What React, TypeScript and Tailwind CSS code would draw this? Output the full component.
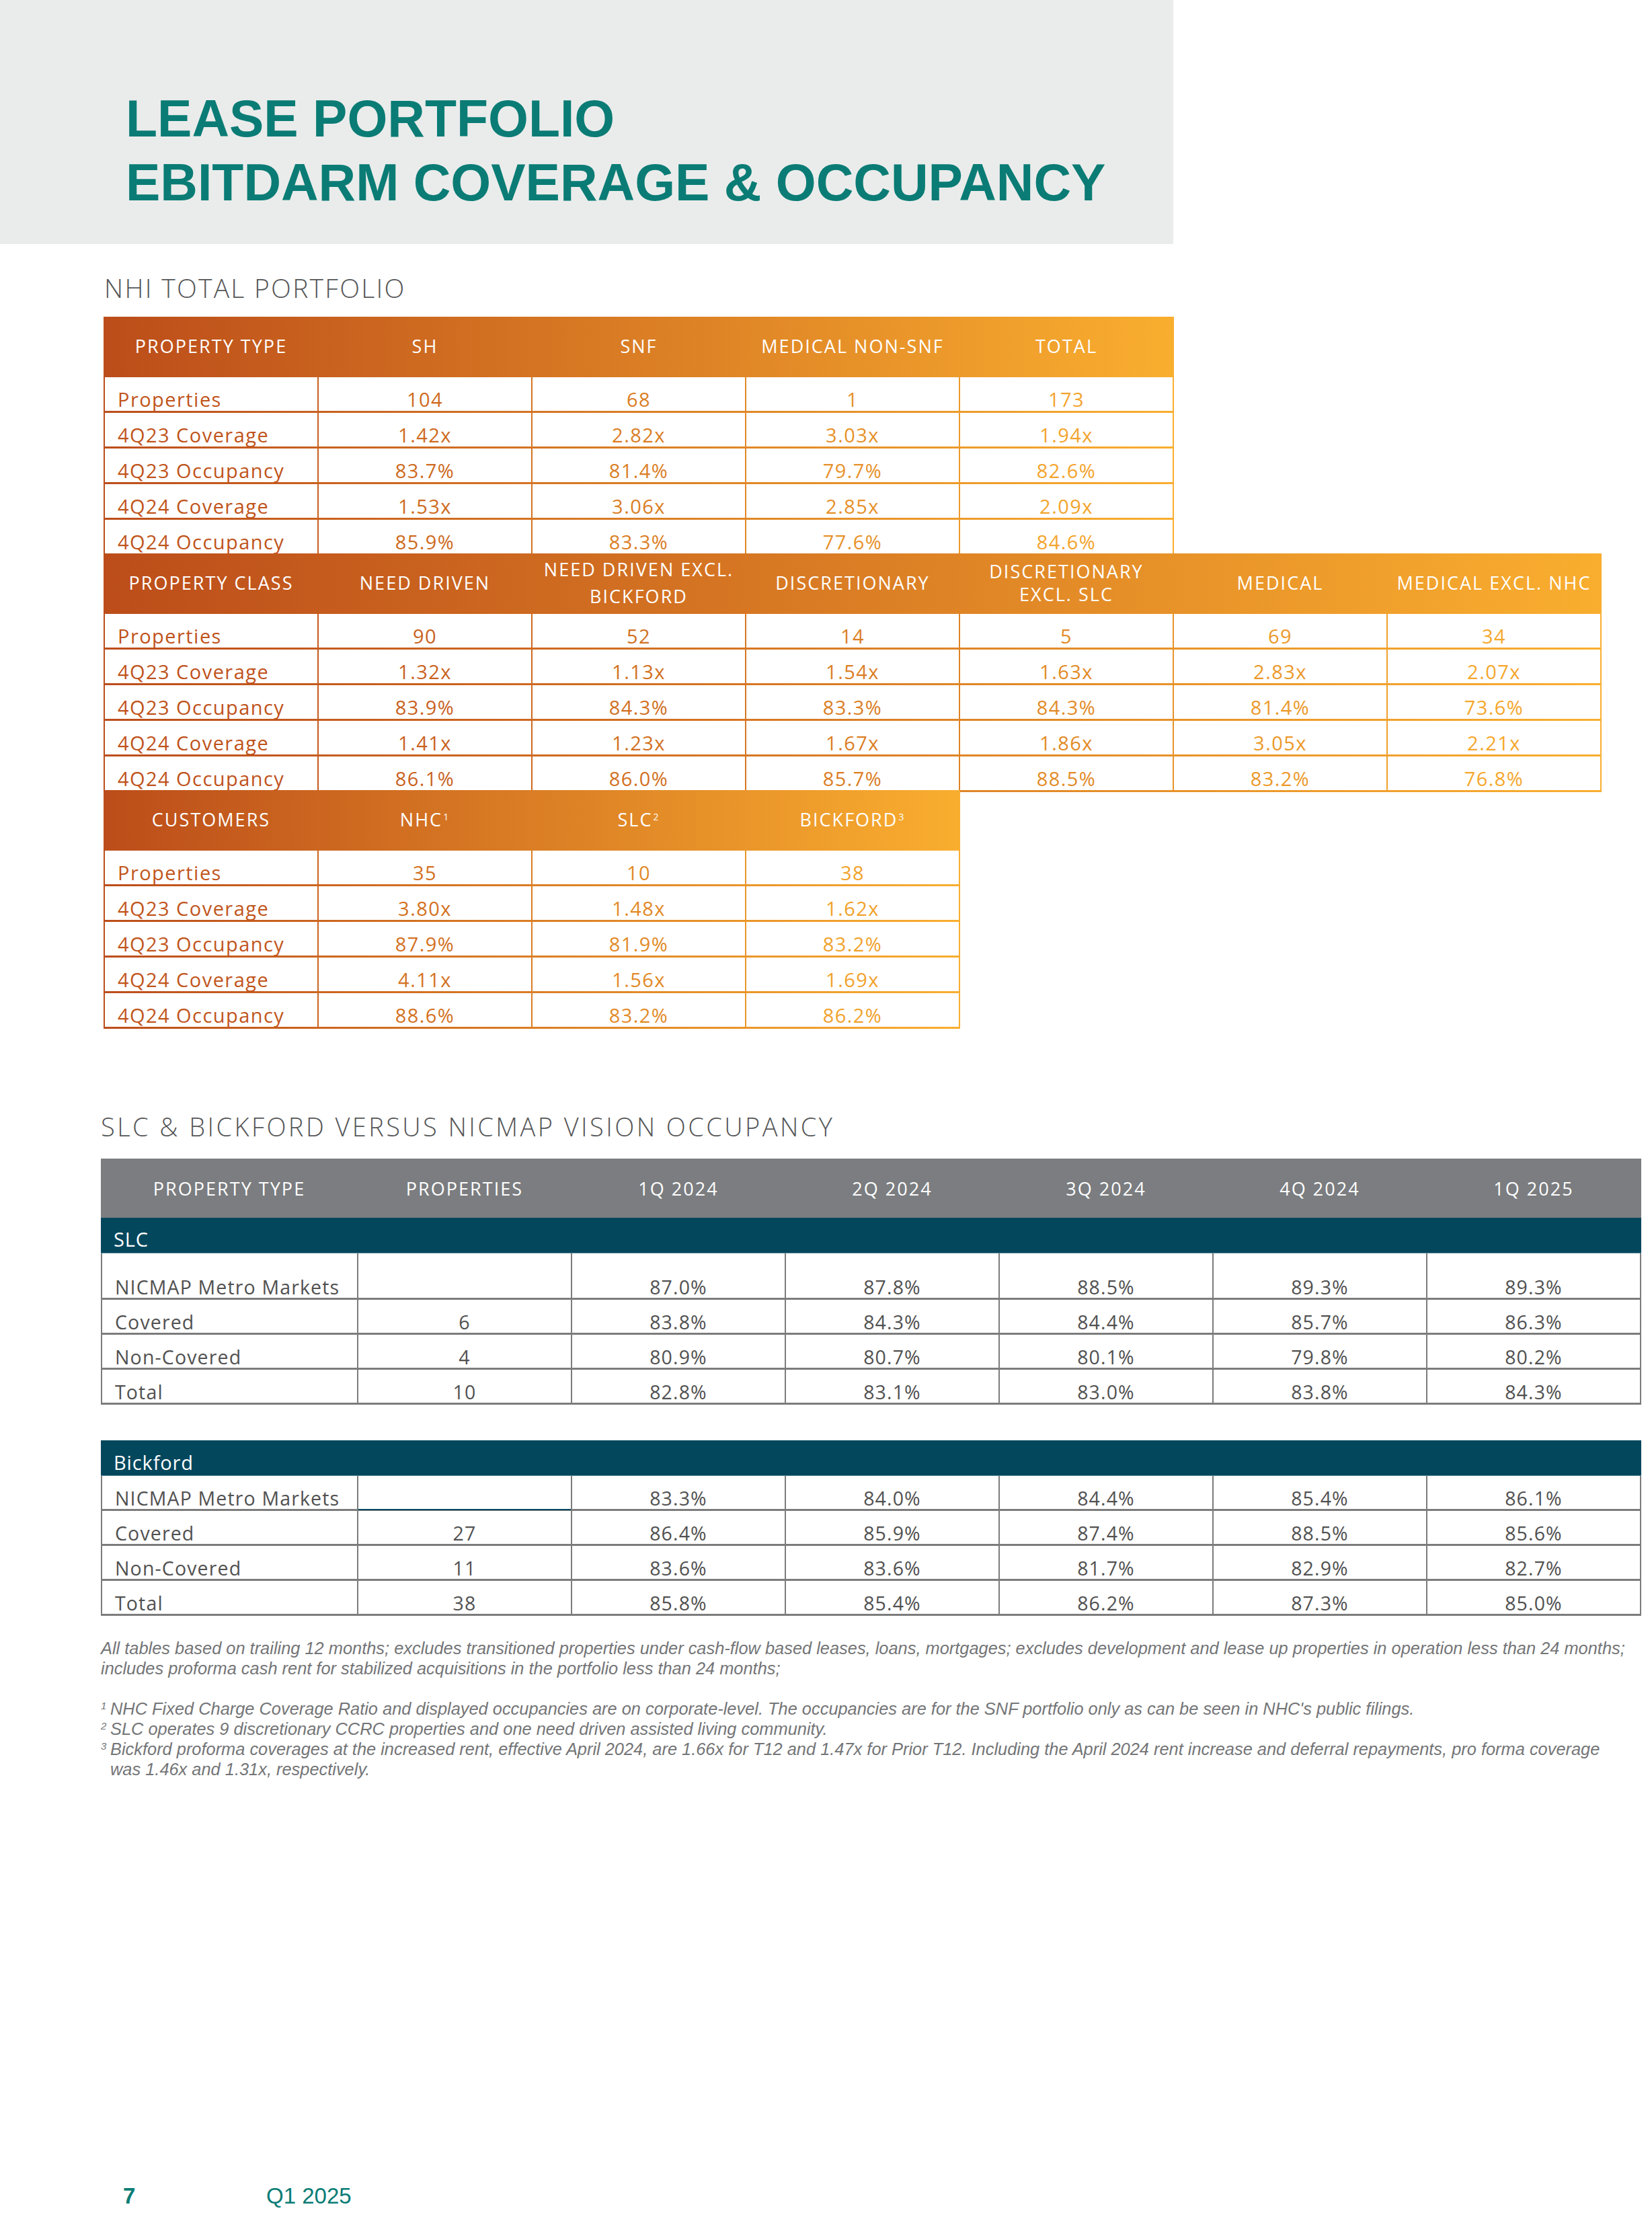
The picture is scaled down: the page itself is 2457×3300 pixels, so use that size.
import React from "react";

const C0 = [0xbc, 0x4d, 0x1a];
const C1 = [0xf9, 0xae, 0x2f];
function grad(t: number) {
  const c = C0.map((a, i) => Math.round(a + (C1[i] - a) * t));
  return `rgb(${c[0]},${c[1]},${c[2]})`;
}

const sans = "font-['Open_Sans','Noto_Sans',sans-serif]";

type OT = {
  heads: React.ReactNode[];
  rows: string[][];
  cols: string;
  width: number;
  wClass: string;
  first?: boolean;
};

function OrangeTable({ heads, rows, cols, width, wClass, first }: OT) {
  const t = (i: number) => (i === 0 ? 110 / width : (2 + i * 318 + 158) / width);
  return (
    <div
      className={`grid ${cols} ${wClass} gap-x-[2px] gap-y-[3px] px-[2px] pb-[3px] bg-[linear-gradient(to_right,#bc4d1a,#f9ae2f)] ${
        first ? "" : "-mt-[3px]"
      }`}
    >
      {heads.map((h, i) => (
        <div
          key={i}
          className="h-[87px] flex items-center justify-center text-center text-white uppercase text-[27px] tracking-[0.075em] leading-[36px]"
        >
          {h}
        </div>
      ))}
      {rows.map((r, ri) =>
        r.map((v, ci) => (
          <div
            key={ri + "-" + ci}
            className={`h-[50px] bg-white flex items-end pb-[3px] text-[29px] leading-none tracking-[0.05em] ${
              ci === 0 ? "pl-[19px]" : "justify-center"
            }`}
            style={{ color: grad(t(ci)) }}
          >
            {v}
          </div>
        ))
      )}
    </div>
  );
}

const Sup = ({ children }: { children: React.ReactNode }) => (
  <sup className="text-[14px] relative -top-[9px] ml-[1px] align-baseline">{children}</sup>
);

type LR = { label: string; props: string; vals: string[] };

function GrayGrid({ rows, tall, tealUnder }: { rows: LR[]; tall?: boolean; tealUnder?: boolean }) {
  return (
    <div className="grid grid-cols-[379px_repeat(6,316px)] gap-x-[2px] gap-y-[3px] px-[2px] pb-[3px] bg-[#7c7c7c] w-[2291px]">
      {rows.map((r, ri) => {
        const h = tall && ri === 0 ? "h-[66px]" : "h-[49px]";
        const cells = [r.label, r.props, ...r.vals];
        return cells.map((v, ci) => (
          <div
            key={ri + "-" + ci}
            className={`${h} bg-white flex items-end pb-[2px] text-[28.5px] leading-none tracking-[0.04em] text-[#515151] ${
              ci === 0 ? "pl-[19px]" : "justify-center"
            } ${tealUnder && ri === 0 && ci === 1 ? "shadow-[0_2px_0_#0b4a60]" : ""}`}
          >
            {v}
          </div>
        ));
      })}
    </div>
  );
}

export default function App() {
  const slc: LR[] = [
    { label: "NICMAP Metro Markets", props: "", vals: ["87.0%", "87.8%", "88.5%", "89.3%", "89.3%"] },
    { label: "Covered", props: "6", vals: ["83.8%", "84.3%", "84.4%", "85.7%", "86.3%"] },
    { label: "Non-Covered", props: "4", vals: ["80.9%", "80.7%", "80.1%", "79.8%", "80.2%"] },
    { label: "Total", props: "10", vals: ["82.8%", "83.1%", "83.0%", "83.8%", "84.3%"] },
  ];
  const bick: LR[] = [
    { label: "NICMAP Metro Markets", props: "", vals: ["83.3%", "84.0%", "84.4%", "85.4%", "86.1%"] },
    { label: "Covered", props: "27", vals: ["86.4%", "85.9%", "87.4%", "88.5%", "85.6%"] },
    { label: "Non-Covered", props: "11", vals: ["83.6%", "83.6%", "81.7%", "82.9%", "82.7%"] },
    { label: "Total", props: "38", vals: ["85.8%", "85.4%", "86.2%", "87.3%", "85.0%"] },
  ];

  return (
    <div className={`w-[2457px] h-[3300px] bg-white flex flex-col overflow-hidden ${sans}`}>
      {/* Title band */}
      <div className="w-[1745px] h-[363px] bg-[#eaeceb] pl-[187px] pt-[129px]">
        <h1 className="font-['Liberation_Sans',Arial,sans-serif] font-bold text-[77px] leading-[95px] text-[#0a7c75] whitespace-nowrap">
          LEASE PORTFOLIO
          <br />
          EBITDARM COVERAGE &amp; OCCUPANCY
        </h1>
      </div>

      {/* NHI total portfolio */}
      <div className="pl-[154px]">
        <div className="mt-[45px] text-[39px] leading-none font-light tracking-[0.058em] text-[#555657] pl-[1px]">
          NHI TOTAL PORTFOLIO
        </div>
        <div className="mt-[24px] flex flex-col">
          <OrangeTable
            first
            cols="grid-cols-[repeat(5,316px)]"
            width={1592}
            wClass="w-[1592px]"
            heads={["Property Type", "SH", "SNF", "Medical Non-SNF", "Total"]}
            rows={[
              ["Properties", "104", "68", "1", "173"],
              ["4Q23 Coverage", "1.42x", "2.82x", "3.03x", "1.94x"],
              ["4Q23 Occupancy", "83.7%", "81.4%", "79.7%", "82.6%"],
              ["4Q24 Coverage", "1.53x", "3.06x", "2.85x", "2.09x"],
              ["4Q24 Occupancy", "85.9%", "83.3%", "77.6%", "84.6%"],
            ]}
          />
          <OrangeTable
            cols="grid-cols-[repeat(7,316px)]"
            width={2228}
            wClass="w-[2228px]"
            heads={[
              "Property Class",
              "Need Driven",
              <span className="leading-[40px]">
                Need Driven Excl.
                <br />
                Bickford
              </span>,
              "Discretionary",
              <span className="leading-[34px]">
                Discretionary
                <br />
                Excl. SLC
              </span>,
              "Medical",
              "Medical Excl. NHC",
            ]}
            rows={[
              ["Properties", "90", "52", "14", "5", "69", "34"],
              ["4Q23 Coverage", "1.32x", "1.13x", "1.54x", "1.63x", "2.83x", "2.07x"],
              ["4Q23 Occupancy", "83.9%", "84.3%", "83.3%", "84.3%", "81.4%", "73.6%"],
              ["4Q24 Coverage", "1.41x", "1.23x", "1.67x", "1.86x", "3.05x", "2.21x"],
              ["4Q24 Occupancy", "86.1%", "86.0%", "85.7%", "88.5%", "83.2%", "76.8%"],
            ]}
          />
          <OrangeTable
            cols="grid-cols-[repeat(4,316px)]"
            width={1274}
            wClass="w-[1274px]"
            heads={[
              "Customers",
              <span>
                NHC<Sup>1</Sup>
              </span>,
              <span>
                SLC<Sup>2</Sup>
              </span>,
              <span>
                Bickford<Sup>3</Sup>
              </span>,
            ]}
            rows={[
              ["Properties", "35", "10", "38"],
              ["4Q23 Coverage", "3.80x", "1.48x", "1.62x"],
              ["4Q23 Occupancy", "87.9%", "81.9%", "83.2%"],
              ["4Q24 Coverage", "4.11x", "1.56x", "1.69x"],
              ["4Q24 Occupancy", "88.6%", "83.2%", "86.2%"],
            ]}
          />
        </div>
      </div>

      {/* SLC & Bickford */}
      <div className="pl-[150px]">
        <div className="mt-[126px] text-[38px] leading-none font-light tracking-[0.09em] text-[#555657] whitespace-nowrap">
          SLC &amp; BICKFORD VERSUS NICMAP VISION OCCUPANCY
        </div>
        <div className="mt-[29px] w-[2291px] flex flex-col">
          <div className="h-[88px] bg-[#7b7d80] grid grid-cols-[382px_repeat(6,318px)] items-center text-white uppercase text-[27px] tracking-[0.075em] leading-none text-center">
            <div>Property Type</div>
            <div>Properties</div>
            <div>1Q 2024</div>
            <div>2Q 2024</div>
            <div>3Q 2024</div>
            <div>4Q 2024</div>
            <div>1Q 2025</div>
          </div>
          <div className="h-[53px] bg-[#03475d] flex items-end pl-[19px] pb-[6px] text-white text-[29px] leading-none tracking-[0.03em] border-b border-[#5b8a99]">
            SLC
          </div>
          <GrayGrid rows={slc} tall />
          <div className="h-[53px] mt-[53px] bg-[#03475d] flex items-end pl-[19px] pb-[5px] text-white text-[29px] leading-none tracking-[0.03em] border-b border-[#5b8a99]">
            Bickford
          </div>
          <GrayGrid rows={bick} tealUnder />
        </div>

        {/* Footnotes */}
        <div className="mt-[33px] font-['Liberation_Sans',Arial,sans-serif] italic text-[25.4px] leading-[30px] text-[#747577] whitespace-nowrap">
          <div>
            All tables based on trailing 12 months; excludes transitioned properties under cash-flow based leases, loans,
            mortgages; excludes development and lease up properties in operation less than 24 months;
          </div>
          <div>includes proforma cash rent for stabilized acquisitions in the portfolio less than 24 months;</div>
          <div className="mt-[30px] flex">
            <span className="w-[14px] text-[15px] leading-[22px]">1</span>
            <span>
              NHC Fixed Charge Coverage Ratio and displayed occupancies are on corporate-level. The occupancies are for the
              SNF portfolio only as can be seen in NHC's public filings.
            </span>
          </div>
          <div className="flex">
            <span className="w-[14px] text-[15px] leading-[22px]">2</span>
            <span>SLC operates 9 discretionary CCRC properties and one need driven assisted living community.</span>
          </div>
          <div className="flex">
            <span className="w-[14px] text-[15px] leading-[22px]">3</span>
            <span>
              Bickford proforma coverages at the increased rent, effective April 2024, are 1.66x for T12 and 1.47x for Prior
              T12. Including the April 2024 rent increase and deferral repayments, pro forma coverage
              <br />
              was 1.46x and 1.31x, respectively.
            </span>
          </div>
        </div>
      </div>

      {/* Footer */}
      <div className="mt-auto pb-[18px] pl-[183px] flex font-['Liberation_Sans',Arial,sans-serif] text-[33px] leading-none text-[#0a7c75]">
        <span className="w-[213px] font-bold">7</span>
        <span>Q1 2025</span>
      </div>
    </div>
  );
}
